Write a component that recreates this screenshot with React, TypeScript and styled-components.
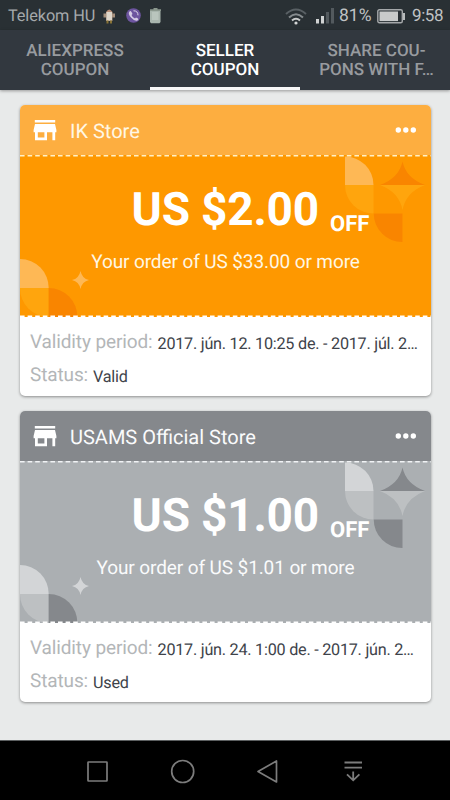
import React from "react";
import styled, { createGlobalStyle } from "styled-components";

const Global = createGlobalStyle`
  * { box-sizing: border-box; }
  body { margin: 0; background: #e8eaea; font-family: Roboto, sans-serif; text-rendering: geometricPrecision; }
`;

const Screen = styled.div`
  width: 450px;
  height: 800px;
  display: flex;
  flex-direction: column;
  overflow: hidden;
  background: #e8eaea;
`;

const StatusBar = styled.header`
  height: 30px;
  flex: none;
  display: flex;
  align-items: center;
  justify-content: space-between;
  padding: 2px 7px 0 8px;
  background: #293034;
  color: #a5a9ab;
  font-size: 16.3px;
  line-height: 28px;
`;

const StatusGroup = styled.div<{ $bright?: boolean }>`
  display: flex;
  align-items: center;
  white-space: nowrap;
  color: ${(p) => (p.$bright ? "#c0c3c4" : "#a5a9ab")};
  svg { flex: none; display: block; }
`;

const Carrier = styled.span`
  width: 93px;
  letter-spacing: -0.1px;
`;

const Battery = styled.span`
  width: 38px;
  font-size: 17.5px;
`;

const Clock = styled.span`
  width: 31px;
  margin-left: 6px;
  font-size: 17px;
  letter-spacing: -0.4px;
`;

const Tabs = styled.nav`
  height: 60px;
  flex: none;
  display: grid;
  grid-template-columns: repeat(3, 150px);
  background: #32383f;
  box-shadow: 0 1px 3px rgba(0, 0, 0, 0.35);
`;

const Tab = styled.div<{ $active?: boolean; $wide?: boolean }>`
  padding-top: 12px;
  padding-left: ${(p) => (p.$wide ? 3 : 0)}px;
  text-align: center;
  font-size: 17px;
  font-weight: 500;
  line-height: 19px;
  white-space: pre-line;
  color: ${(p) => (p.$active ? "#ffffff" : "#989b9f")};
  border-bottom: 3px solid ${(p) => (p.$active ? "#f7f7f7" : "transparent")};
`;

const List = styled.main`
  flex: 1;
  display: flex;
  flex-direction: column;
  gap: 15px;
  padding: 15px 19px 0 20px;
`;

const Card = styled.article`
  height: 291px;
  flex: none;
  display: flex;
  flex-direction: column;
  border-radius: 5px;
  overflow: hidden;
  background: #fff;
  box-shadow: 0 1px 3px rgba(0, 0, 0, 0.4);
`;

const CardHeader = styled.div<{ $color: string; $ink: string }>`
  height: 50px;
  flex: none;
  display: flex;
  align-items: center;
  padding: 1px 14px 0 13px;
  color: ${(p) => p.$ink};
  background: ${(p) => p.$color};
  svg { flex: none; }
`;

const StoreName = styled.h2`
  flex: 1;
  margin: 0 0 0 13px;
  font-size: 20px;
  font-weight: 400;
`;

const CardBody = styled.div<{ $color: string }>`
  position: relative;
  height: 162px;
  flex: none;
  background: ${(p) => p.$color};
  color: #fff;
`;

const Art = styled.svg`
  position: absolute;
  inset: 0;
  display: block;
`;

const Offer = styled.div`
  position: relative;
  display: flex;
  flex-direction: column;
  align-items: center;
`;

const Price = styled.div`
  display: flex;
  align-items: baseline;
  gap: 12.5px;
  margin-left: 50px;
  padding-top: 28px;
  line-height: 54px;
  white-space: nowrap;
`;

const Amount = styled.strong`
  width: 186px;
  font-size: 46px;
  font-weight: 700;
  letter-spacing: -0.2px;
`;

const Off = styled.span`
  position: relative;
  top: 6px;
  font-size: 22px;
  font-weight: 700;
`;

const Terms = styled.div<{ $ink: string }>`
  margin-top: 4px;
  font-size: 19px;
  line-height: 24px;
  letter-spacing: -0.1px;
  color: ${(p) => p.$ink};
  white-space: nowrap;
`;

const Details = styled.dl`
  margin: 0;
  padding: 8px 10px 0 10px;
`;

const Detail = styled.div`
  display: flex;
  align-items: baseline;
  height: 33px;
  line-height: 33px;
  white-space: nowrap;
`;

const Label = styled.dt`
  font-size: 19px;
  letter-spacing: -0.12px;
  color: #b3b6b8;
`;

const Value = styled.dd`
  position: relative;
  top: 1px;
  margin: 0 0 0 5px;
  font-size: 16.2px;
  letter-spacing: -0.24px;
  color: #3e434a;
`;

const NavBar = styled.footer`
  height: 60px;
  flex: none;
  display: flex;
  justify-content: space-between;
  align-items: center;
  padding: 2px 82px 0 83px;
  background: #000;
  border-top: 1px solid #5c5f60;
`;

const Gap = styled.span<{ $size: number }>`
  width: ${(p) => p.$size}px;
`;

type Palette = {
  header: string;
  body: string;
  dark: string;
  mid: string;
  pale: string;
  dash: string;
  ink: string;
};

const orange: Palette = {
  header: "#fdae40",
  body: "#fe9800",
  dark: "#f98500",
  mid: "#ffa50d",
  pale: "#feb855",
  dash: "#fff0c4",
  ink: "#fff7e4",
};

const gray: Palette = {
  header: "#85888c",
  body: "#abafb2",
  dark: "#85888c",
  mid: "#bdc0c2",
  pale: "#d3d5d7",
  dash: "#f1f3f5",
  ink: "#fafbfc",
};

const StoreIcon = () => (
  <svg width="24" height="21" viewBox="0 0 24 21" fill="#fff">
    <path d="M1.800 0H22.200v2.600H1.800zM2 4h20l1.400 6v2.300H22.200v8H19.400v-8H14v8H2v-8H.6V10zM4.800 12.300v5.200h6.600v-5.200z" fillRule="evenodd" />
  </svg>
);

const MoreIcon = () => (
  <svg width="22" height="8" viewBox="0 0 22 8" fill="#fff">
    <circle cx="3.300" cy="3" r="2.700" />
    <circle cx="10.800" cy="3" r="2.700" />
    <circle cx="18.300" cy="3" r="2.700" />
  </svg>
);

const CouponArt = ({ p }: { p: Palette }) => (
  <Art width="411" height="162" viewBox="0 0 411 162">
    <path d="M325 1.500A28.500 28.500 0 0 1 353.500 30H325z" fill={p.pale} />
    <path d="M325 30H353.500V58.500A28.500 28.500 0 0 1 325 30z" fill={p.mid} />
    <path d="M382.500 6.500Q386 23 405 30H360Q379 23 382.500 6.500z" fill={p.dark} />
    <path d="M360 30H405Q386 37 382.500 55Q379 37 360 30z" fill={p.mid} />
    <path d="M353.700 58.500H382.500V87A28.500 28.500 0 0 1 353.700 58.500z" fill={p.dark} />
    <path d="M0 104A28.700 28.700 0 0 1 28.700 133H0z" fill={p.pale} />
    <path d="M0 133H28.700V162A28.700 28.700 0 0 1 0 133z" fill={p.mid} />
    <path d="M28.700 133A28.700 28.700 0 0 1 57.400 162H28.700z" fill={p.dark} />
    <path d="M60.500 116Q62 123.500 69 125Q62 126.500 60.500 134Q59 126.500 52 125Q59 123.500 60.500 116z" fill={p.pale} />
    <path d="M0 .8H411" stroke={p.dash} strokeWidth="1.600" strokeDasharray="4.600 3" fill="none" />
    <path d="M0 161.400H411" stroke="#fff" strokeWidth="1.800" strokeDasharray="4.600 3" fill="none" />
  </Art>
);

type CouponProps = {
  palette: Palette;
  store: string;
  amount: string;
  terms: string;
  period: string;
  status: string;
};

const Coupon = ({ palette, store, amount, terms, period, status }: CouponProps) => (
  <Card>
    <CardHeader $color={palette.header} $ink={palette.ink}>
      <StoreIcon />
      <StoreName>{store}</StoreName>
      <MoreIcon />
    </CardHeader>
    <CardBody $color={palette.body}>
      <CouponArt p={palette} />
      <Offer>
        <Price>
          <Amount>{amount}</Amount>
          <Off>OFF</Off>
        </Price>
        <Terms $ink={palette.ink}>{terms}</Terms>
      </Offer>
    </CardBody>
    <Details>
      <Detail>
        <Label>Validity period:</Label>
        <Value>{period}</Value>
      </Detail>
      <Detail>
        <Label>Status:</Label>
        <Value>{status}</Value>
      </Detail>
    </Details>
  </Card>
);

const NotificationIcons = () => (
  <svg width="62" height="18" viewBox="0 0 62 18">
    <path d="M5 5q3.300-5 6.500 0v2H5z" fill="#b98f78" />
    <path d="M2.500 6.500h11.500v4h-2.500v3.500H5v-3.500H2.500z" fill="#a58f7c" />
    <path d="M5.500 5h5.500v8.500H5.500z" fill="#ded6ca" />
    <path d="M5.500 13.500h2v3h-2zM9 13.500h2v3H9z" fill="#8a7436" />
    <circle cx="32.500" cy="8.500" r="7.300" fill="#6d559f" />
    <path d="M28.500 4.500q1-1 2 .5l1 2-1 1q1 3 3.500 3.500l1-1 2 1q1 1-.5 2-3 1-6.500-3T28.500 4.500z" fill="#d6cde6" />
    <path d="M32.500 3.800q4.500 0 4.500 4.500" stroke="#ddd6e9" fill="none" />
    <path d="M49 3h10.500v12l-1 1.200H50L49 15z" fill="#a9b6ae" />
    <path d="M49 2.200h11v1.800H49zM52.500 1h4v2h-4z" fill="#8b988e" />
    <path d="M51 5h6.500v8H51z" fill="#b9c5bd" />
  </svg>
);

const WifiIcon = () => (
  <svg width="22" height="17" viewBox="0 0 22 17" fill="none" strokeWidth="2">
    <path d="M1 6Q11-3 21 6" stroke="#596064" />
    <path d="M4 9.500Q11 3 18 9.500" stroke="#858b8e" />
    <path d="M7 12.500Q11 9 15 12.500" stroke="#c9cccc" />
    <circle cx="11" cy="15" r="1.600" fill="#d4d6d6" />
  </svg>
);

const SignalIcon = () => (
  <svg width="19" height="16" viewBox="0 0 19 16">
    <path d="M0 11h3v4.500H0zM5 8h3v7.500H5z" fill="#d0d3d3" />
    <path d="M10 4h3v11.500h-3zM15 0h3v15.500h-3z" fill="#535a5e" />
  </svg>
);

const BatteryIcon = () => (
  <svg width="29" height="15" viewBox="0 0 29 15">
    <rect x=".8" y=".8" width="24.500" height="13" rx="1.500" fill="none" stroke="#a5a8aa" strokeWidth="1.400" />
    <rect x="2.500" y="2.500" width="18.500" height="9.600" fill="#c8caca" />
    <path d="M27 4v7" stroke="#b8bbbc" strokeWidth="2" />
  </svg>
);

const SquareIcon = () => (
  <svg width="28" height="28" viewBox="0 0 28 28" fill="none" stroke="#7c7c7c" strokeWidth="1.700">
    <rect x="5" y="4" width="19" height="19" rx=".5" />
  </svg>
);

const CircleIcon = () => (
  <svg width="28" height="28" viewBox="0 0 28 28" fill="none" stroke="#7c7c7c" strokeWidth="1.700">
    <circle cx="13.700" cy="13.500" r="11" />
  </svg>
);

const BackIcon = () => (
  <svg width="28" height="28" viewBox="0 0 28 28" fill="none" stroke="#7c7c7c" strokeWidth="1.700" strokeLinejoin="round">
    <path d="M22.500 3v21L4 13.500z" />
  </svg>
);

const PullDownIcon = () => (
  <svg width="28" height="28" viewBox="0 0 28 28" fill="none" stroke="#7c7c7c" strokeWidth="1.800">
    <path d="M4.500 4.500h17.500M4.500 9.700h17.500M13.200 13.500v9M7 16.300l6.200 6 6.200-6" />
  </svg>
);

export default function App() {
  return (
    <>
      <Global />
      <Screen>
        <StatusBar>
          <StatusGroup>
            <Carrier>Telekom HU</Carrier>
            <NotificationIcons />
          </StatusGroup>
          <StatusGroup $bright>
            <WifiIcon />
            <Gap $size={9} />
            <SignalIcon />
            <Gap $size={4} />
            <Battery>81%</Battery>
            <BatteryIcon />
            <Clock>9:58</Clock>
          </StatusGroup>
        </StatusBar>
        <Tabs>
          <Tab>{"ALIEXPRESS\nCOUPON"}</Tab>
          <Tab $active>{"SELLER\nCOUPON"}</Tab>
          <Tab $wide>{"SHARE COU-\nPONS WITH F…"}</Tab>
        </Tabs>
        <List>
          <Coupon
            palette={orange}
            store="IK Store"
            amount="US $2.00"
            terms="Your order of US $33.00 or more"
            period="2017. jún. 12. 10:25 de. - 2017. júl. 2…"
            status="Valid"
          />
          <Coupon
            palette={gray}
            store="USAMS Official Store"
            amount="US $1.00"
            terms="Your order of US $1.01 or more"
            period="2017. jún. 24. 1:00 de. - 2017. jún. 2…"
            status="Used"
          />
        </List>
        <NavBar>
          <SquareIcon />
          <CircleIcon />
          <BackIcon />
          <PullDownIcon />
        </NavBar>
      </Screen>
    </>
  );
}
